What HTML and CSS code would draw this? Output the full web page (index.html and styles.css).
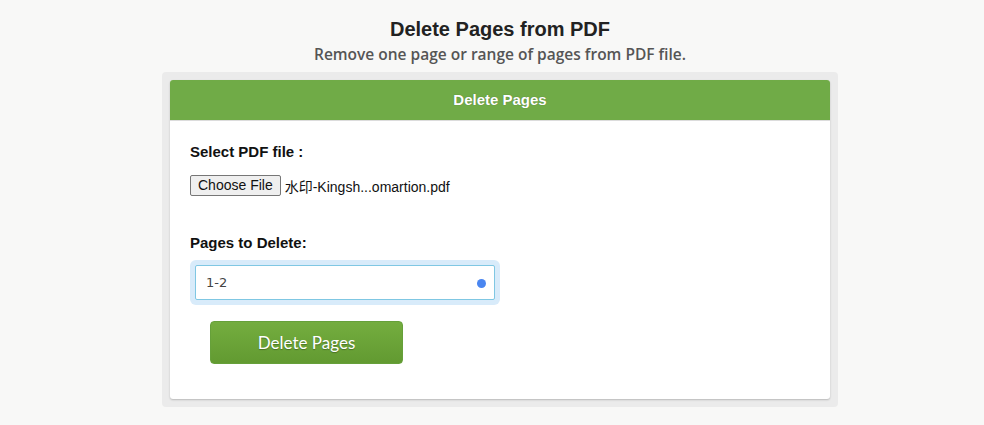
FILE: index.html
```html
<!DOCTYPE html>
<html lang="en">
<head>
<meta charset="utf-8">
<title>Delete Pages from PDF</title>
<link rel="stylesheet" href="styles.css">
</head>
<body>
<div class="page">
  <header class="intro">
    <h1 class="intro-title">Delete Pages from PDF</h1>
    <p class="intro-sub">Remove one page or range of pages from PDF file.</p>
  </header>

  <section class="panel">
    <div class="card">
      <div class="card-head">Delete Pages</div>
      <form class="card-body">
        <label class="field-label">Select PDF file :</label>
        <div class="file-row">
          <span class="file-btn">Choose File</span>
          <span class="file-name">水印-Kingsh...omartion.pdf</span>
        </div>

        <label class="field-label field-label--pages">Pages to Delete:</label>
        <div class="text-wrap">
          <span class="text-input">1-2</span>
          <span class="fill-dot"></span>
        </div>

        <button type="button" class="submit-btn">Delete Pages</button>
      </form>
    </div>
  </section>
</div>
</body>
</html>
```

FILE: styles.css
```css
html, body {
  margin: 0;
  padding: 0;
}

body {
  background: #f8f8f7;
  font-family: "Liberation Sans", Arial, sans-serif;
  color: #222;
  height: 425px;
  overflow: hidden;
}

.page {
  padding-left: 16px;
  display: flex;
  flex-direction: column;
  align-items: center;
}

.intro {
  text-align: center;
  padding-top: 16px;
}

.intro-title {
  margin: 0;
  font-size: 20px;
  line-height: 26px;
  font-weight: bold;
  color: #222;
}

.intro-sub {
  margin: 1px 0 0;
  font-family: "Open Sans", sans-serif;
  font-weight: 600;
  font-size: 15.5px;
  line-height: 22px;
  color: #555;
}

.panel {
  margin-top: 7px;
  width: 660px;
  padding: 8px;
  background: #ebebeb;
  border-radius: 4px;
}

.card {
  background: #fff;
  border-radius: 3px;
  box-shadow: 0 1px 2px rgba(0, 0, 0, 0.22);
  overflow: hidden;
}

.card-head {
  height: 40px;
  line-height: 40px;
  background: #70ab47;
  border-bottom: 1px solid #dcdcdc;
  color: #fff;
  text-align: center;
  font-weight: bold;
  font-size: 15px;
  text-shadow: 0 0 1px rgba(0, 0, 0, 0.35);
}

.card-body {
  padding: 21px 20px 35px;
  margin: 0;
}

.field-label {
  display: block;
  font-weight: bold;
  font-size: 15px;
  line-height: 20px;
  color: #111;
}

.file-row {
  margin-top: 13px;
  display: flex;
  align-items: center;
  font-size: 14px;
}

.file-btn {
  box-sizing: border-box;
  height: 21px;
  line-height: 19px;
  padding: 0 7px;
  background: #efefef;
  border: 1px solid #767676;
  border-radius: 2px;
  font-size: 14px;
  color: #111;
}

.file-name {
  margin-left: 4px;
  color: #111;
  font-family: "Liberation Sans", "Noto Sans CJK SC", sans-serif;
}

.field-label--pages {
  margin-top: 37px;
}

.text-wrap {
  position: relative;
  margin: 12px 0 0 5px;
  width: 300px;
  height: 35px;
  box-sizing: border-box;
  border: 1px solid #7fc7e3;
  border-radius: 2px;
  box-shadow: 0 0 0 5px #d8ebfa;
  background: #fff;
}

.text-input {
  display: block;
  padding-left: 10px;
  line-height: 33px;
  font-family: "DejaVu Sans", Verdana, sans-serif;
  font-size: 13px;
  color: #444;
}

.fill-dot {
  position: absolute;
  right: 8px;
  top: 13px;
  width: 9px;
  height: 9px;
  border-radius: 50%;
  background: #4a86f0;
}

.submit-btn {
  display: block;
  margin: 21px 0 0 20px;
  width: 193px;
  height: 43px;
  border: 1px solid #66a03a;
  border-radius: 4px;
  background: linear-gradient(#74ad3f, #629a31);
  color: #fff;
  font-family: Lato, sans-serif;
  font-size: 17px;
  text-shadow: 0 1px 1px rgba(0, 0, 0, 0.3);
  cursor: pointer;
}
```
